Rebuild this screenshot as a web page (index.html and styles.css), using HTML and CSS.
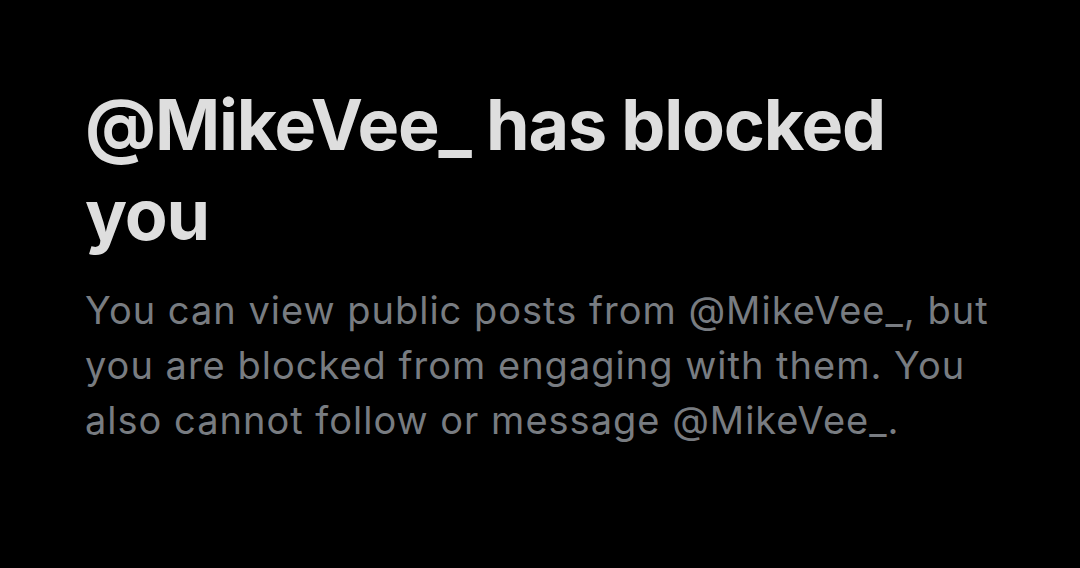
FILE: index.html
```html
<!DOCTYPE html>
<html>
<head>
<meta charset="utf-8">
<link rel="stylesheet" href="styles.css">
</head>
<body>
<main class="blocked">
  <h1 class="blocked-title">@MikeVee_ has blocked you</h1>
  <p class="blocked-text">You can view public posts from @MikeVee_, but you are blocked from engaging with them. You also cannot follow or message @MikeVee_.</p>
</main>
</body>
</html>
```

FILE: styles.css
```css
html, body {
  margin: 0;
  padding: 0;
  background: #000;
  height: 100%;
}
.blocked {
  padding: 80px 85px 0 85px;
  width: 910px;
  font-family: Inter, "Noto Sans", sans-serif;
}
.blocked-title {
  margin: 0;
  font-size: 70px;
  line-height: 90px;
  font-weight: 700;
  color: #dedede;
  letter-spacing: -1.2px;
}
.blocked-text {
  margin: 23px 0 0 0;
  font-size: 38px;
  line-height: 55px;
  font-weight: 400;
  color: #787c81;
  letter-spacing: 1px;
}
```
